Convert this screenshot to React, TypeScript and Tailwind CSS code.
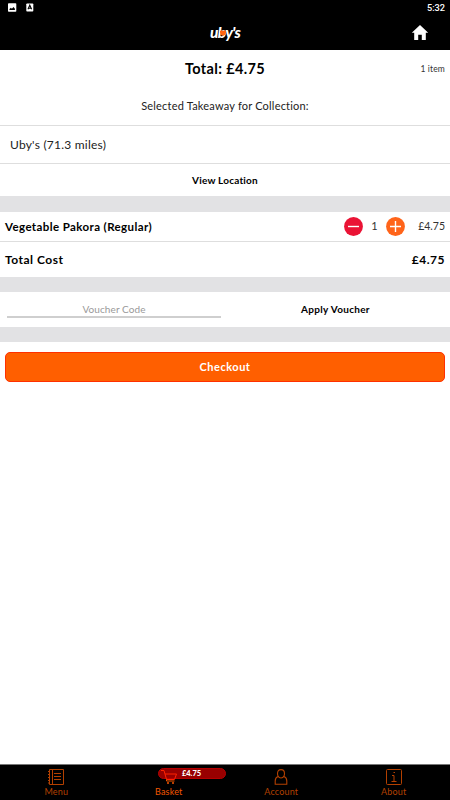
import type { ReactNode } from "react";

function StatusBar() {
  return (
    <div className="flex h-[15px] items-center justify-between pl-2 pr-[5px]">
      <div className="flex items-center gap-[9px]">
        <svg width="9" height="9" viewBox="0 0 9 9">
          <rect x="0" y="0.3" width="8.3" height="8.4" rx="0.8" fill="#fff" />
          <path d="M1.5 6.9V6l1.4-1.3 1 1L5.5 4l1.4 1.8v1.1z" fill="#000" />
        </svg>
        <svg width="8" height="9" viewBox="0 0 8 9">
          <rect x="0.3" y="0.5" width="7" height="8" rx="0.8" fill="#fff" />
          <path d="M2 6.2 3.8 2.200l1.8 4M2.6 5.2h2.5" stroke="#000" strokeWidth="1.1" fill="none" />
        </svg>
      </div>
      <span className="font-[Roboto] text-[9.2px] font-medium leading-none text-white">5:32</span>
    </div>
  );
}

function Header() {
  return (
    <header className="h-[50px] shrink-0 bg-black">
      <StatusBar />
      <div className="grid h-[35px] grid-cols-[1fr_auto_1fr] items-center">
        <span />
        <div className="relative flex h-[26px] items-start text-white">
          <span className="font-[Lato] text-[15.500px] font-black italic leading-[24px] tracking-[-0.7px]">uby's</span>
          <svg className="absolute left-[10px] top-[10px]" width="6" height="6" viewBox="0 0 6 6">
            <path d="M0 1Q1.5-.3 3 1 4.500-.3 6 1v2Q5 5.600 3 6 .5 5.500 0 3z" fill="#ff6410" />
          </svg>
        </div>
        <svg className="mr-[21px] justify-self-end" width="18" height="18" viewBox="0 0 18 18">
          <path d="M9 1 .8 8.700h2.400V16h4v-5.200h3.600V16h4V8.700h2.400z" fill="#fff" />
        </svg>
      </div>
    </header>
  );
}

function RoundButton({ plus = false }: { plus?: boolean }) {
  return (
    <button className="h-[19px] w-[19px]">
      <svg width="19" height="19" viewBox="0 0 19 19">
        <circle cx="9.5" cy="9.5" r="9.4" fill={plus ? "#ff641a" : "#ea1335"} />
        <path d={plus ? "M4 9.500h11M9.500 4v11" : "M4 9.500h11"} stroke="#fff" strokeWidth="1.4" />
      </svg>
    </button>
  );
}

function Tab({ label, active = false, children }: { label: string; active?: boolean; children: ReactNode }) {
  return (
    <div className={`relative flex flex-col items-center ${active ? "text-[#f45700]" : "text-[#b34000]"}`}>
      <div className="mt-1 flex h-4 items-center">{children}</div>
      <span className="mt-px text-[9px] leading-[12px] tracking-[0.16px]">{label}</span>
    </div>
  );
}

function TabBar() {
  return (
    <nav className="grid h-9 shrink-0 grid-cols-4 border-t border-[#777] bg-black">
      <Tab label="Menu">
        <svg width="16" height="16" viewBox="0 0 16 16" fill="none" stroke="currentColor" strokeWidth="1">
          <path d="M1.500.5h14v15h-14zM4.500.5v15M0 2.500h1.500M0 5.500h1.500M0 8.500h1.500M0 11.500h1.500M0 14h1.500M6 4.500h7M6 7.500h7M6 10.500h7" />
        </svg>
      </Tab>
      <Tab label="Basket" active>
        <div className="absolute left-[45px] top-[3px] flex h-[11px] w-[68px] items-center justify-center rounded-full border border-[#b60000] bg-[#980000] text-[7.500px] font-black leading-none text-white">
          £4.75
        </div>
        <svg className="relative mt-px" width="16" height="15" viewBox="0 0 16 15" fill="none">
          <path d="M0 .5h3l2.500 9h8L15.500 4H4" stroke="#ff2300" />
          <path d="M5.500 9.500v1.500h8M6.500 12.500v1h1v-1zM11.500 12.500v1h1v-1z" stroke="#f45700" />
        </svg>
      </Tab>
      <Tab label="Account">
        <svg width="14" height="16" viewBox="0 0 14 16" fill="none" stroke="currentColor" strokeWidth="1.1">
          <path d="M4 7Q3.500 6 3.500 4.500 3.500.6 7 .6t3.500 3.900Q10.500 6 10 7 9 9 7 9T4 7zM4 7.500Q1.200 8.500 1.200 12v3.300h11.600V12Q12.800 8.500 10 7.500" />
        </svg>
      </Tab>
      <Tab label="About">
        <svg width="16" height="16" viewBox="0 0 16 16" fill="none" stroke="currentColor">
          <rect x="0.5" y="0.5" width="15" height="15" rx="1" />
          <path d="M6 6.500h2v6M5.500 12.500h5M7.500 3.500h1.500" />
        </svg>
      </Tab>
    </nav>
  );
}

export default function App() {
  return (
    <div className="flex h-[800px] w-[450px] flex-col overflow-hidden bg-white font-[Lato,sans-serif] text-black [font-variant-ligatures:none]">
      <Header />
      <main className="flex flex-1 flex-col">
        <div className="grid h-[38px] grid-cols-[1fr_auto_1fr] items-center px-[5px]">
          <span />
          <h1 className="text-[14.500px] font-bold tracking-[0.35px]">Total: £4.75</h1>
          <span className="justify-self-end pt-px text-[8.500px] tracking-[0.15px] text-[#333]">1 item</span>
        </div>
        <div className="flex h-[38px] items-center justify-center border-b border-[#dedede] text-[11px] tracking-[0.2px] text-[#222]">
          Selected Takeaway for Collection:
        </div>
        <div className="flex h-[38px] items-center border-b border-[#dedede] px-[10px] text-[12px] tracking-[0.22px] text-[#222]">
          Uby's (71.3 miles)
        </div>
        <button className="h-8 pt-px text-[10px] font-bold tracking-[0.2px]">View Location</button>
        <div className="h-4 bg-[#e2e2e4]" />
        <div className="flex h-[30px] items-center border-b border-[#dedede] px-[5px]">
          <span className="flex-1 text-[11.500px] font-bold tracking-[0.4px]">Vegetable Pakora (Regular)</span>
          <RoundButton />
          <span className="w-[23px] text-center text-[11px] text-[#333]">1</span>
          <RoundButton plus />
          <span className="w-10 text-right text-[10.500px] text-[#333]">£4.75</span>
        </div>
        <div className="flex h-[35px] items-center justify-between px-[5px] pt-px text-[12px] font-bold tracking-[0.5px]">
          <span>Total Cost</span>
          <span>£4.75</span>
        </div>
        <div className="h-[15px] bg-[#e2e2e4]" />
        <div className="flex h-[35px] items-center">
          <div className="ml-[7px] flex h-[17px] w-[214px] items-center justify-center border-b-2 border-[#cfcfcf] pt-0.5 text-[10px] tracking-[0.1px] text-[#999]">
            Voucher Code
          </div>
          <button className="flex-1 text-[10px] font-bold tracking-[0.3px]">Apply Voucher</button>
        </div>
        <div className="h-[15px] bg-[#e2e2e4]" />
        <button className="mx-[5px] mt-[10px] h-[30px] rounded-[5px] border border-[#ff3000] bg-[#ff5f00] text-[11px] font-bold tracking-[0.5px] text-white">
          Checkout
        </button>
      </main>
      <TabBar />
    </div>
  );
}
